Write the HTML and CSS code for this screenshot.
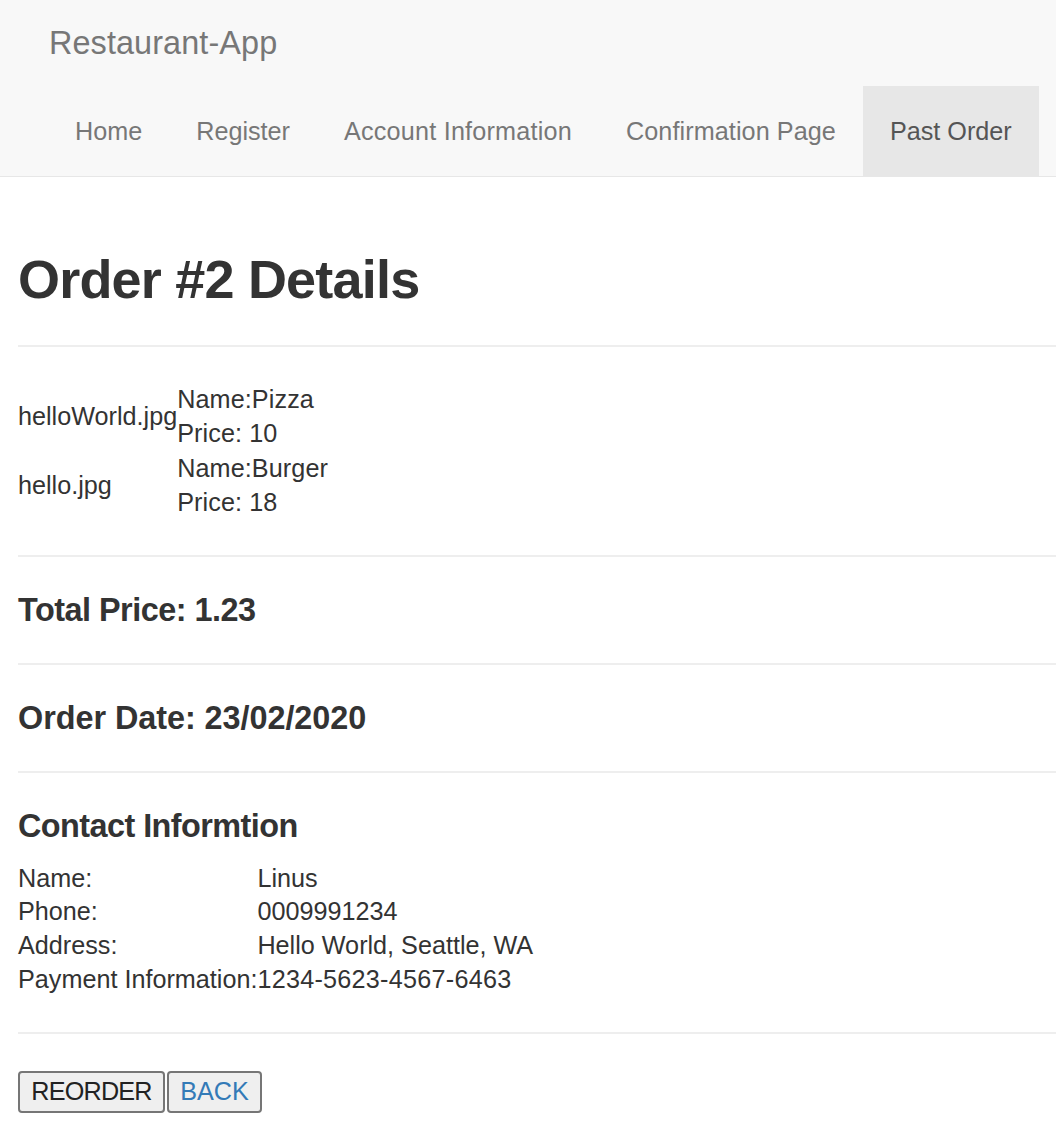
FILE: index.html
```html
<!DOCTYPE html>
<html>
<head>
<meta charset="utf-8">
<title>Restaurant-App</title>
<link rel="stylesheet" href="styles.css">
</head>
<body>
<nav class="navbar">
  <div class="brand-row"><a class="brand" href="#">Restaurant-App</a></div>
  <ul class="nav">
    <li><a href="#">Home</a></li>
    <li><a href="#">Register</a></li>
    <li><a class="wide" href="#">Account Information</a></li>
    <li><a class="wide-s" href="#">Confirmation Page</a></li>
    <li class="active"><a href="#">Past Order</a></li>
  </ul>
</nav>
<main class="content">
  <h2 class="title">Order #2 Details</h2>
  <hr class="rule">
  <table class="items">
    <tr>
      <td class="img-alt">helloWorld.jpg</td>
      <td class="item-info">Name:Pizza<br>Price: 10</td>
    </tr>
    <tr>
      <td class="img-alt">hello.jpg</td>
      <td class="item-info">Name:Burger<br>Price: 18</td>
    </tr>
  </table>
  <hr class="rule">
  <h4 class="sub sub-total">Total Price: 1.23</h4>
  <hr class="rule">
  <h4 class="sub sub-date">Order Date: 23/02/2020</h4>
  <hr class="rule">
  <h4 class="sub sub-contact">Contact Informtion</h4>
  <table class="contact">
    <tr><td>Name:</td><td>Linus</td></tr>
    <tr><td>Phone:</td><td>0009991234</td></tr>
    <tr><td>Address:</td><td>Hello World, Seattle, WA</td></tr>
    <tr><td>Payment Information:</td><td class="num">1234-5623-4567-6463</td></tr>
  </table>
  <hr class="rule">
  <div class="actions"><button class="btn btn-reorder">REORDER</button><button class="btn btn-back">BACK</button></div>
</main>
</body>
</html>
```

FILE: styles.css
```css
html, body {
  margin: 0;
  padding: 0;
  background: #fff;
}
body {
  font-family: "Liberation Sans", Arial, Helvetica, sans-serif;
  font-size: 25.2px;
  line-height: 36px;
  color: #333;
}
.navbar {
  background: #f8f8f8;
  border-bottom: 1px solid #e7e7e7;
}
.brand-row {
  height: 86px;
  box-sizing: border-box;
  padding: 25px 0 0 49px;
}
.brand {
  font-size: 32.4px;
  line-height: 36px;
  color: #777;
  text-decoration: none;
  letter-spacing: 0.1px;
}
.nav {
  list-style: none;
  margin: 0;
  padding: 0 0 0 48px;
  display: flex;
}
.nav a {
  display: block;
  padding: 27px 27px;
  line-height: 36px;
  color: #777;
  text-decoration: none;
}
.nav a.wide {
  letter-spacing: 0.21px;
}
.nav a.wide-s {
  letter-spacing: 0.08px;
}
.nav .active a {
  background: #e7e7e7;
  color: #555;
}
.content {
  padding: 72.6px 0 0 18px;
}
.title {
  margin: 0;
  font-size: 54px;
  line-height: 59.4px;
  font-weight: bold;
  letter-spacing: -0.8px;
}
.rule {
  margin: 35.5px 0;
  border: 0;
  border-top: 2px solid #eee;
  height: 0;
}
.items, .contact {
  border-collapse: collapse;
  border-spacing: 0;
}
.items td, .contact td {
  padding: 0;
}
.items td {
  line-height: 34.4px;
}
.item-info {
  letter-spacing: 0.1px;
}
.img-alt {
  vertical-align: middle;
}
.contact td {
  line-height: 33.7px;
}
.contact td.num {
  letter-spacing: 0.25px;
}
.sub {
  margin: 0;
  font-size: 32.4px;
  line-height: 35px;
  font-weight: bold;
}
.sub-total {
  letter-spacing: -0.5px;
}
.sub-date {
  letter-spacing: -0.05px;
}
.sub-contact {
  letter-spacing: -0.55px;
  margin-bottom: 18px;
}
.actions {
  display: flex;
  gap: 2px;
  margin-top: 37px;
}
.btn {
  font-family: "Liberation Sans", Arial, Helvetica, sans-serif;
  font-size: 25.2px;
  height: 42px;
  box-sizing: border-box;
  border: 2px solid #767676;
  border-radius: 4px;
  background: #efefef;
  color: #222;
  margin: 0;
  padding: 0;
}
.btn-reorder {
  width: 147px;
  letter-spacing: -0.8px;
}
.btn-back {
  width: 95px;
  color: #337ab7;
}
```
